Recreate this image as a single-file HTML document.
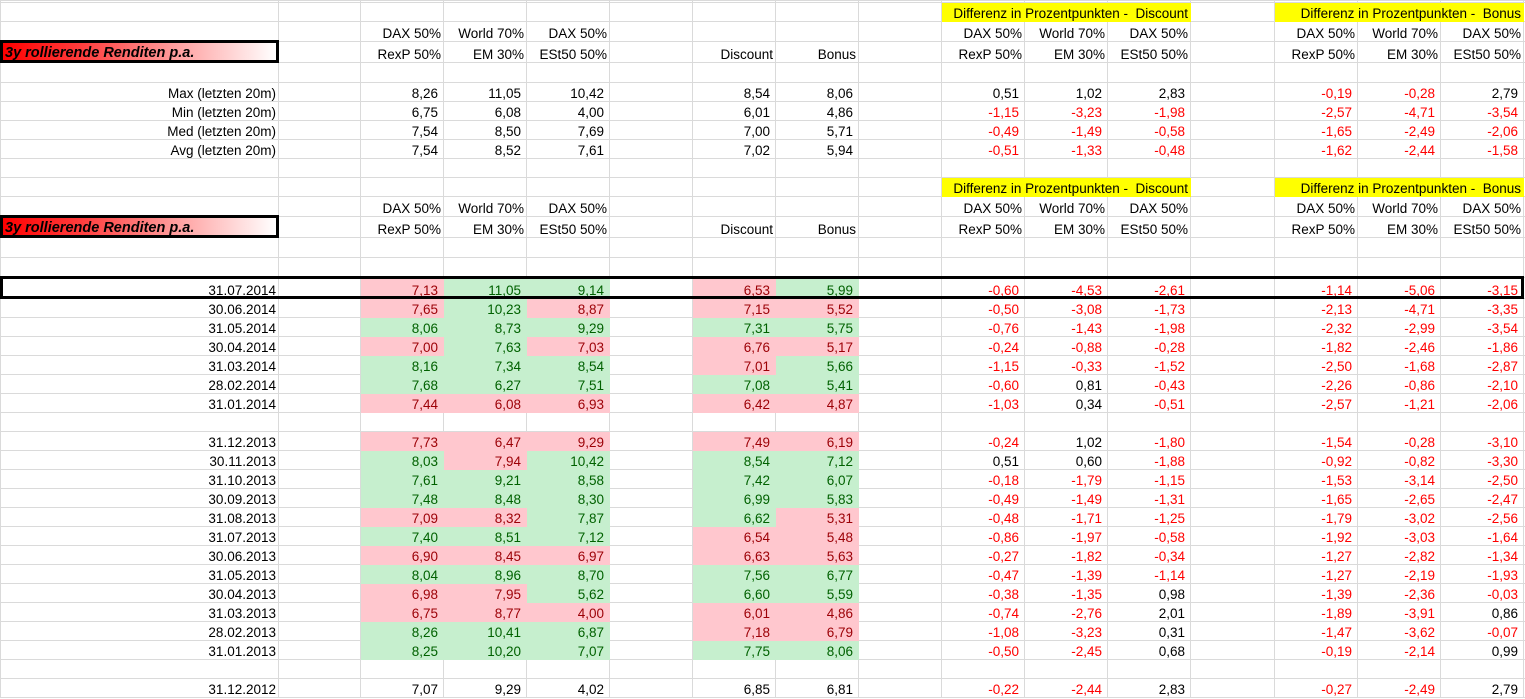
<!DOCTYPE html>
<html><head><meta charset="utf-8"><style>
body{margin:0;background:#fff;width:1525px;height:699px;overflow:hidden;position:relative;font-family:"Liberation Sans",sans-serif;font-size:13.5px;}
table{border-collapse:collapse;table-layout:fixed;width:1525px;position:absolute;left:0;top:0;}
td{border:1px solid #dadada;padding:0 5px 0 0;text-align:right;vertical-align:bottom;white-space:nowrap;overflow:visible;line-height:15px;color:#000;}
td.h{padding-right:2px;}
.r{background:#ffc7ce;color:#9c0006;border-color:#ffc7ce;}
.g{background:#c6efce;color:#006100;border-color:#c6efce;}
.n{color:#ff0000;}
.y{background:#ffff00;padding-right:2px;border-color:#ffff00;}
.box{position:absolute;border:3px solid #000;box-sizing:border-box;}
.title{left:0;width:279px;height:23px;background:linear-gradient(to right,#ff0000 0%,#ff4040 30%,#ffb0b0 70%,#fff 100%);font-weight:bold;font-style:italic;font-size:14.5px;line-height:17px;padding:2px 0 0 2px;}
</style></head><body>
<table>
<colgroup><col style="width:278px"><col style="width:82px"><col style="width:83px"><col style="width:83px"><col style="width:83px"><col style="width:83px"><col style="width:83px"><col style="width:83px"><col style="width:83px"><col style="width:83px"><col style="width:83px"><col style="width:83px"><col style="width:84px"><col style="width:83px"><col style="width:83px"><col style="width:83px"><col style="width:2px"></colgroup>
<tr style="height:2px"><td></td><td></td><td></td><td></td><td></td><td></td><td></td><td></td><td></td><td></td><td></td><td></td><td></td><td></td><td></td><td></td><td></td></tr>
<tr style="height:19px"><td></td><td></td><td></td><td></td><td></td><td></td><td></td><td></td><td></td><td colspan="3" class="y">Differenz in Prozentpunkten -&nbsp; Discount</td><td></td><td colspan="3" class="y">Differenz in Prozentpunkten -&nbsp; Bonus</td><td></td></tr>
<tr style="height:20px"><td></td><td></td><td class="h">DAX 50%</td><td class="h">World 70%</td><td class="h">DAX 50%</td><td></td><td></td><td></td><td></td><td class="h">DAX 50%</td><td class="h">World 70%</td><td class="h">DAX 50%</td><td></td><td class="h">DAX 50%</td><td class="h">World 70%</td><td class="h">DAX 50%</td><td></td></tr>
<tr style="height:21px"><td></td><td></td><td class="h">RexP 50%</td><td class="h">EM 30%</td><td class="h">ESt50 50%</td><td></td><td class="h">Discount</td><td class="h">Bonus</td><td></td><td class="h">RexP 50%</td><td class="h">EM 30%</td><td class="h">ESt50 50%</td><td></td><td class="h">RexP 50%</td><td class="h">EM 30%</td><td class="h">ESt50 50%</td><td></td></tr>
<tr style="height:20px"><td></td><td></td><td></td><td></td><td></td><td></td><td></td><td></td><td></td><td></td><td></td><td></td><td></td><td></td><td></td><td></td><td></td></tr>
<tr style="height:19px"><td class="h">Max (letzten 20m)</td><td></td><td>8,26</td><td>11,05</td><td>10,42</td><td></td><td>8,54</td><td>8,06</td><td></td><td>0,51</td><td>1,02</td><td>2,83</td><td></td><td class="n">-0,19</td><td class="n">-0,28</td><td>2,79</td><td></td></tr>
<tr style="height:19px"><td class="h">Min (letzten 20m)</td><td></td><td>6,75</td><td>6,08</td><td>4,00</td><td></td><td>6,01</td><td>4,86</td><td></td><td class="n">-1,15</td><td class="n">-3,23</td><td class="n">-1,98</td><td></td><td class="n">-2,57</td><td class="n">-4,71</td><td class="n">-3,54</td><td></td></tr>
<tr style="height:19px"><td class="h">Med (letzten 20m)</td><td></td><td>7,54</td><td>8,50</td><td>7,69</td><td></td><td>7,00</td><td>5,71</td><td></td><td class="n">-0,49</td><td class="n">-1,49</td><td class="n">-0,58</td><td></td><td class="n">-1,65</td><td class="n">-2,49</td><td class="n">-2,06</td><td></td></tr>
<tr style="height:19px"><td class="h">Avg (letzten 20m)</td><td></td><td>7,54</td><td>8,52</td><td>7,61</td><td></td><td>7,02</td><td>5,94</td><td></td><td class="n">-0,51</td><td class="n">-1,33</td><td class="n">-0,48</td><td></td><td class="n">-1,62</td><td class="n">-2,44</td><td class="n">-1,58</td><td></td></tr>
<tr style="height:19px"><td></td><td></td><td></td><td></td><td></td><td></td><td></td><td></td><td></td><td></td><td></td><td></td><td></td><td></td><td></td><td></td><td></td></tr>
<tr style="height:19px"><td></td><td></td><td></td><td></td><td></td><td></td><td></td><td></td><td></td><td colspan="3" class="y">Differenz in Prozentpunkten -&nbsp; Discount</td><td></td><td colspan="3" class="y">Differenz in Prozentpunkten -&nbsp; Bonus</td><td></td></tr>
<tr style="height:20px"><td></td><td></td><td class="h">DAX 50%</td><td class="h">World 70%</td><td class="h">DAX 50%</td><td></td><td></td><td></td><td></td><td class="h">DAX 50%</td><td class="h">World 70%</td><td class="h">DAX 50%</td><td></td><td class="h">DAX 50%</td><td class="h">World 70%</td><td class="h">DAX 50%</td><td></td></tr>
<tr style="height:21px"><td></td><td></td><td class="h">RexP 50%</td><td class="h">EM 30%</td><td class="h">ESt50 50%</td><td></td><td class="h">Discount</td><td class="h">Bonus</td><td></td><td class="h">RexP 50%</td><td class="h">EM 30%</td><td class="h">ESt50 50%</td><td></td><td class="h">RexP 50%</td><td class="h">EM 30%</td><td class="h">ESt50 50%</td><td></td></tr>
<tr style="height:20px"><td></td><td></td><td></td><td></td><td></td><td></td><td></td><td></td><td></td><td></td><td></td><td></td><td></td><td></td><td></td><td></td><td></td></tr>
<tr style="height:20px"><td></td><td></td><td></td><td></td><td></td><td></td><td></td><td></td><td></td><td></td><td></td><td></td><td></td><td></td><td></td><td></td><td></td></tr>
<tr style="height:21px"><td class="h">31.07.2014</td><td></td><td class="r">7,13</td><td class="g">11,05</td><td class="g">9,14</td><td></td><td class="r">6,53</td><td class="g">5,99</td><td></td><td class="n">-0,60</td><td class="n">-4,53</td><td class="n">-2,61</td><td></td><td class="n">-1,14</td><td class="n">-5,06</td><td class="n">-3,15</td><td></td></tr>
<tr style="height:19px"><td class="h">30.06.2014</td><td></td><td class="r">7,65</td><td class="g">10,23</td><td class="r">8,87</td><td></td><td class="r">7,15</td><td class="r">5,52</td><td></td><td class="n">-0,50</td><td class="n">-3,08</td><td class="n">-1,73</td><td></td><td class="n">-2,13</td><td class="n">-4,71</td><td class="n">-3,35</td><td></td></tr>
<tr style="height:19px"><td class="h">31.05.2014</td><td></td><td class="g">8,06</td><td class="g">8,73</td><td class="g">9,29</td><td></td><td class="g">7,31</td><td class="g">5,75</td><td></td><td class="n">-0,76</td><td class="n">-1,43</td><td class="n">-1,98</td><td></td><td class="n">-2,32</td><td class="n">-2,99</td><td class="n">-3,54</td><td></td></tr>
<tr style="height:19px"><td class="h">30.04.2014</td><td></td><td class="r">7,00</td><td class="g">7,63</td><td class="r">7,03</td><td></td><td class="r">6,76</td><td class="r">5,17</td><td></td><td class="n">-0,24</td><td class="n">-0,88</td><td class="n">-0,28</td><td></td><td class="n">-1,82</td><td class="n">-2,46</td><td class="n">-1,86</td><td></td></tr>
<tr style="height:19px"><td class="h">31.03.2014</td><td></td><td class="g">8,16</td><td class="g">7,34</td><td class="g">8,54</td><td></td><td class="r">7,01</td><td class="g">5,66</td><td></td><td class="n">-1,15</td><td class="n">-0,33</td><td class="n">-1,52</td><td></td><td class="n">-2,50</td><td class="n">-1,68</td><td class="n">-2,87</td><td></td></tr>
<tr style="height:19px"><td class="h">28.02.2014</td><td></td><td class="g">7,68</td><td class="g">6,27</td><td class="g">7,51</td><td></td><td class="g">7,08</td><td class="g">5,41</td><td></td><td class="n">-0,60</td><td>0,81</td><td class="n">-0,43</td><td></td><td class="n">-2,26</td><td class="n">-0,86</td><td class="n">-2,10</td><td></td></tr>
<tr style="height:19px"><td class="h">31.01.2014</td><td></td><td class="r">7,44</td><td class="r">6,08</td><td class="r">6,93</td><td></td><td class="r">6,42</td><td class="r">4,87</td><td></td><td class="n">-1,03</td><td>0,34</td><td class="n">-0,51</td><td></td><td class="n">-2,57</td><td class="n">-1,21</td><td class="n">-2,06</td><td></td></tr>
<tr style="height:19px"><td></td><td></td><td></td><td></td><td></td><td></td><td></td><td></td><td></td><td></td><td></td><td></td><td></td><td></td><td></td><td></td><td></td></tr>
<tr style="height:19px"><td class="h">31.12.2013</td><td></td><td class="r">7,73</td><td class="r">6,47</td><td class="r">9,29</td><td></td><td class="r">7,49</td><td class="r">6,19</td><td></td><td class="n">-0,24</td><td>1,02</td><td class="n">-1,80</td><td></td><td class="n">-1,54</td><td class="n">-0,28</td><td class="n">-3,10</td><td></td></tr>
<tr style="height:19px"><td class="h">30.11.2013</td><td></td><td class="g">8,03</td><td class="r">7,94</td><td class="g">10,42</td><td></td><td class="g">8,54</td><td class="g">7,12</td><td></td><td>0,51</td><td>0,60</td><td class="n">-1,88</td><td></td><td class="n">-0,92</td><td class="n">-0,82</td><td class="n">-3,30</td><td></td></tr>
<tr style="height:19px"><td class="h">31.10.2013</td><td></td><td class="g">7,61</td><td class="g">9,21</td><td class="g">8,58</td><td></td><td class="g">7,42</td><td class="g">6,07</td><td></td><td class="n">-0,18</td><td class="n">-1,79</td><td class="n">-1,15</td><td></td><td class="n">-1,53</td><td class="n">-3,14</td><td class="n">-2,50</td><td></td></tr>
<tr style="height:19px"><td class="h">30.09.2013</td><td></td><td class="g">7,48</td><td class="g">8,48</td><td class="g">8,30</td><td></td><td class="g">6,99</td><td class="g">5,83</td><td></td><td class="n">-0,49</td><td class="n">-1,49</td><td class="n">-1,31</td><td></td><td class="n">-1,65</td><td class="n">-2,65</td><td class="n">-2,47</td><td></td></tr>
<tr style="height:19px"><td class="h">31.08.2013</td><td></td><td class="r">7,09</td><td class="r">8,32</td><td class="g">7,87</td><td></td><td class="g">6,62</td><td class="r">5,31</td><td></td><td class="n">-0,48</td><td class="n">-1,71</td><td class="n">-1,25</td><td></td><td class="n">-1,79</td><td class="n">-3,02</td><td class="n">-2,56</td><td></td></tr>
<tr style="height:19px"><td class="h">31.07.2013</td><td></td><td class="g">7,40</td><td class="g">8,51</td><td class="g">7,12</td><td></td><td class="r">6,54</td><td class="r">5,48</td><td></td><td class="n">-0,86</td><td class="n">-1,97</td><td class="n">-0,58</td><td></td><td class="n">-1,92</td><td class="n">-3,03</td><td class="n">-1,64</td><td></td></tr>
<tr style="height:19px"><td class="h">30.06.2013</td><td></td><td class="r">6,90</td><td class="r">8,45</td><td class="r">6,97</td><td></td><td class="r">6,63</td><td class="r">5,63</td><td></td><td class="n">-0,27</td><td class="n">-1,82</td><td class="n">-0,34</td><td></td><td class="n">-1,27</td><td class="n">-2,82</td><td class="n">-1,34</td><td></td></tr>
<tr style="height:19px"><td class="h">31.05.2013</td><td></td><td class="g">8,04</td><td class="g">8,96</td><td class="g">8,70</td><td></td><td class="g">7,56</td><td class="g">6,77</td><td></td><td class="n">-0,47</td><td class="n">-1,39</td><td class="n">-1,14</td><td></td><td class="n">-1,27</td><td class="n">-2,19</td><td class="n">-1,93</td><td></td></tr>
<tr style="height:19px"><td class="h">30.04.2013</td><td></td><td class="r">6,98</td><td class="r">7,95</td><td class="g">5,62</td><td></td><td class="g">6,60</td><td class="g">5,59</td><td></td><td class="n">-0,38</td><td class="n">-1,35</td><td>0,98</td><td></td><td class="n">-1,39</td><td class="n">-2,36</td><td class="n">-0,03</td><td></td></tr>
<tr style="height:19px"><td class="h">31.03.2013</td><td></td><td class="r">6,75</td><td class="r">8,77</td><td class="r">4,00</td><td></td><td class="r">6,01</td><td class="r">4,86</td><td></td><td class="n">-0,74</td><td class="n">-2,76</td><td>2,01</td><td></td><td class="n">-1,89</td><td class="n">-3,91</td><td>0,86</td><td></td></tr>
<tr style="height:19px"><td class="h">28.02.2013</td><td></td><td class="g">8,26</td><td class="g">10,41</td><td class="g">6,87</td><td></td><td class="r">7,18</td><td class="r">6,79</td><td></td><td class="n">-1,08</td><td class="n">-3,23</td><td>0,31</td><td></td><td class="n">-1,47</td><td class="n">-3,62</td><td class="n">-0,07</td><td></td></tr>
<tr style="height:19px"><td class="h">31.01.2013</td><td></td><td class="g">8,25</td><td class="g">10,20</td><td class="g">7,07</td><td></td><td class="g">7,75</td><td class="g">8,06</td><td></td><td class="n">-0,50</td><td class="n">-2,45</td><td>0,68</td><td></td><td class="n">-0,19</td><td class="n">-2,14</td><td>0,99</td><td></td></tr>
<tr style="height:19px"><td></td><td></td><td></td><td></td><td></td><td></td><td></td><td></td><td></td><td></td><td></td><td></td><td></td><td></td><td></td><td></td><td></td></tr>
<tr style="height:19px"><td class="h">31.12.2012</td><td></td><td>7,07</td><td>9,29</td><td>4,02</td><td></td><td>6,85</td><td>6,81</td><td></td><td class="n">-0,22</td><td class="n">-2,44</td><td>2,83</td><td></td><td class="n">-0,27</td><td class="n">-2,49</td><td>2,79</td><td></td></tr>
</table>
<div class="box title" style="top:40px">3y rollierende Renditen p.a.</div>
<div class="box title" style="top:215px">3y rollierende Renditen p.a.</div>
<div class="box" style="left:0;top:276px;width:1524px;height:23px"></div>
</body></html>
